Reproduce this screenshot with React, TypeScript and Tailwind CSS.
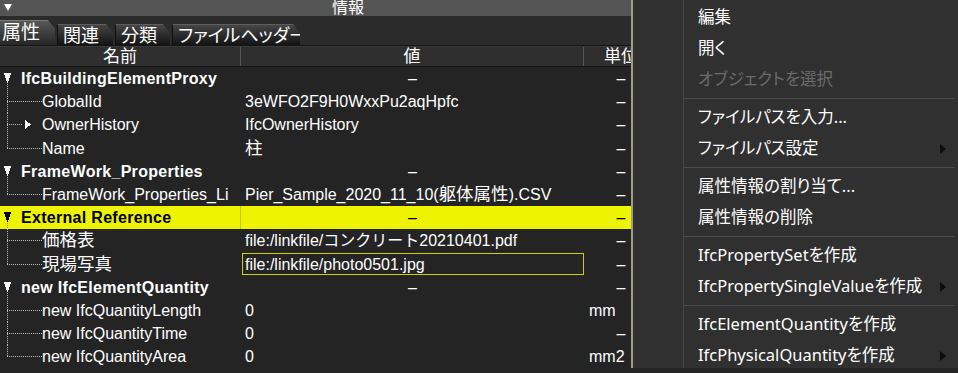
type Kind = "root" | "child" | "last";

interface Row {
  kind: Kind;
  name: string;
  value: string;
  unit: string;
  expand?: boolean;
  highlight?: boolean;
  selected?: boolean;
}

const rows: Row[] = [
  { kind: "root", name: "IfcBuildingElementProxy", value: "–", unit: "–" },
  { kind: "child", name: "GlobalId", value: "3eWFO2F9H0WxxPu2aqHpfc", unit: "–" },
  { kind: "child", name: "OwnerHistory", value: "IfcOwnerHistory", unit: "–", expand: true },
  { kind: "last", name: "Name", value: "柱", unit: "–" },
  { kind: "root", name: "FrameWork_Properties", value: "–", unit: "–" },
  { kind: "last", name: "FrameWork_Properties_Li", value: "Pier_Sample_2020_11_10(躯体属性).CSV", unit: "–" },
  { kind: "root", name: "External Reference", value: "–", unit: "–", highlight: true },
  { kind: "child", name: "価格表", value: "file:/linkfile/コンクリート20210401.pdf", unit: "–" },
  { kind: "last", name: "現場写真", value: "file:/linkfile/photo0501.jpg", unit: "–", selected: true },
  { kind: "root", name: "new IfcElementQuantity", value: "–", unit: "–" },
  { kind: "child", name: "new IfcQuantityLength", value: "0", unit: "mm" },
  { kind: "child", name: "new IfcQuantityTime", value: "0", unit: "–" },
  { kind: "last", name: "new IfcQuantityArea", value: "0", unit: "mm2" },
];

type MenuItem = { t: string; disabled?: boolean; sub?: boolean } | "sep";

const menu: MenuItem[] = [
  { t: "編集" },
  { t: "開く" },
  { t: "オブジェクトを選択", disabled: true },
  "sep",
  { t: "ファイルパスを入力..." },
  { t: "ファイルパス設定", sub: true },
  "sep",
  { t: "属性情報の割り当て..." },
  { t: "属性情報の削除" },
  "sep",
  { t: "IfcPropertySetを作成" },
  { t: "IfcPropertySingleValueを作成", sub: true },
  "sep",
  { t: "IfcElementQuantityを作成" },
  { t: "IfcPhysicalQuantityを作成", sub: true },
];

const tabs = [
  { label: "属性", w: "w-[55px]", active: true },
  { label: "関連", w: "w-[56px]" },
  { label: "分類", w: "w-[55px]" },
  { label: "ファイルヘッダー", w: "w-[128px]" },
];

const DOT = "#bcbcbc";

// kanji in the grid are drawn a bit wider than the latin text
const Mixed = ({ text }: { text: string }) => (
  <>
    {text.split(/([\u4e00-\u9fff]+)/).map((part, i) =>
      /[\u4e00-\u9fff]/.test(part) ? (
        <span key={i} className="text-[17.5px]">
          {part}
        </span>
      ) : (
        part
      )
    )}
  </>
);

const TreeGlyph = ({ row }: { row: Row }) => {
  if (row.kind === "root") {
    return (
      <svg width="21" height="23.2" className="shrink-0" shapeRendering="crispEdges">
        <polygon points="4,6 11,6 8,16 7,16" fill={row.highlight ? "#000" : "#fff"} />
        <line x1="7.5" y1="17" x2="7.5" y2="23.2" stroke={row.highlight ? "#8a8a60" : DOT} strokeDasharray="1 1" />
      </svg>
    );
  }
  return (
    <svg width="42" height="23.2" className="shrink-0" shapeRendering="crispEdges">
      <line x1="7.5" y1="0" x2="7.5" y2={row.kind === "last" ? 12 : 23.2} stroke={DOT} strokeDasharray="1 1" />
      <line x1="7" y1="11.5" x2={row.expand ? 23 : 42} y2="11.5" stroke={DOT} strokeDasharray="1 1" />
      {row.expand && <polygon points="25,7 31,11.5 25,16" fill="#fff" />}
    </svg>
  );
};

const TableRow = ({ row }: { row: Row }) => {
  const dash = row.value === "–";
  return (
    <div
      className={`flex h-[23.2px] items-center leading-[23px] ${
        row.highlight ? "bg-[#edf300] text-black" : "text-white"
      }`}
    >
      <div
        className={`flex h-full w-[241px] shrink-0 items-center overflow-hidden whitespace-nowrap ${
          row.highlight ? "border-r border-[#c4c800]" : ""
        }`}
      >
        <TreeGlyph row={row} />
        <span className={row.kind === "root" ? "font-bold tracking-[0.3px]" : ""}>
          <Mixed text={row.name} />
        </span>
      </div>
      <div className={`flex h-full w-[343px] shrink-0 items-center whitespace-nowrap ${dash ? "justify-center" : ""}`}>
        {row.selected ? (
          <div className="my-[1px] ml-[1px] flex h-[22px] w-full items-center border border-[#cfcf00] pl-[2px]">
            {row.value}
          </div>
        ) : (
          <span className={dash ? "" : "pl-[4px]"}>
            <Mixed text={row.value} />
          </span>
        )}
      </div>
      <div className={`flex h-full w-[74px] shrink-0 items-center ${row.unit === "–" ? "justify-center" : "pl-[5px]"}`}>
        {row.unit}
      </div>
    </div>
  );
};

const InfoPanel = () => (
  <div className="h-[373px] w-[631px] shrink-0 overflow-hidden bg-[#242424]">
    <div className="w-[696px]">
      <div className="relative flex h-[16px] items-center justify-center bg-[#545454] text-[16px] leading-[15px] text-white">
        <svg width="10" height="9" className="absolute left-[3px] top-[3px]">
          <polygon points="1,1 9,1 5,8" fill="#fff" />
        </svg>
        <span className="-mt-px">情報</span>
      </div>

      <div className="flex h-[30px] items-end gap-[2px] border-b border-[#141414] bg-[#2b2b2b]">
        {tabs.map((tab) => (
          <div
            key={tab.label}
            className={`${tab.w} flex shrink-0 items-center whitespace-nowrap text-white [clip-path:polygon(0_0,calc(100%-7px)_0,100%_9px,100%_100%,0_100%)] [font-feature-settings:'palt'] ${
              tab.active
                ? "h-[25px] border-t border-[#7a7a7a] bg-gradient-to-b from-[#585858] to-[#262626] pl-[2px] text-[19px]"
                : "h-[21px] border-t border-l border-t-[#5e5e5e] border-l-[#0e0e0e] bg-gradient-to-b from-[#464646] to-[#141414] pl-[5px] pt-[2px] text-[18px]"
            }`}
          >
            {tab.label}
          </div>
        ))}
      </div>

      <div className="flex h-[21px] border-t border-[#3a3a3a] border-b border-b-[#151515] bg-[#2f2f2f] text-[17px] leading-[19px] text-white">
        <div className="w-[241px] shrink-0 border-r border-[#575757] text-center">名前</div>
        <div className="w-[343px] shrink-0 border-r border-[#575757] text-center">値</div>
        <div className="w-[74px] shrink-0 text-center">単位</div>
      </div>

      <div className="text-[16px]">
        {rows.map((row) => (
          <TableRow key={row.name} row={row} />
        ))}
      </div>
    </div>
  </div>
);

const ContextMenu = () => (
  <div className="absolute left-[631px] top-0 flex h-[368px] w-[327px] border-l-2 border-[#a09e82] bg-[#303030] font-['Noto_Sans','Noto_Sans_CJK_JP',sans-serif] text-[16.5px] [font-feature-settings:'palt']">
    <div className="w-[51px] shrink-0 border-r border-[#474747]" />
    <div className="flex-1 pt-[2px]">
      {menu.map((item, i) =>
        item === "sep" ? (
          <div key={i} className="flex h-[7px] items-center">
            <div className="ml-[-1px] mr-[3px] h-px flex-1 bg-[#4a4a4a]" />
          </div>
        ) : (
          <div key={i} className="flex h-[31px] items-center justify-between pl-[14px] pr-[12px]">
            <span className={item.disabled ? "text-[#6b6b6b]" : "text-white"}>{item.t}</span>
            {item.sub && (
              <svg width="6" height="10">
                <polygon points="0,0 6,5 0,10" fill="#0c0c0c" />
              </svg>
            )}
          </div>
        )
      )}
    </div>
  </div>
);

export default function App() {
  return (
    <div className="relative h-[373px] w-[958px] overflow-hidden bg-[#242424] font-['Liberation_Sans','Noto_Sans_CJK_JP',sans-serif]">
      <InfoPanel />
      <ContextMenu />
    </div>
  );
}
